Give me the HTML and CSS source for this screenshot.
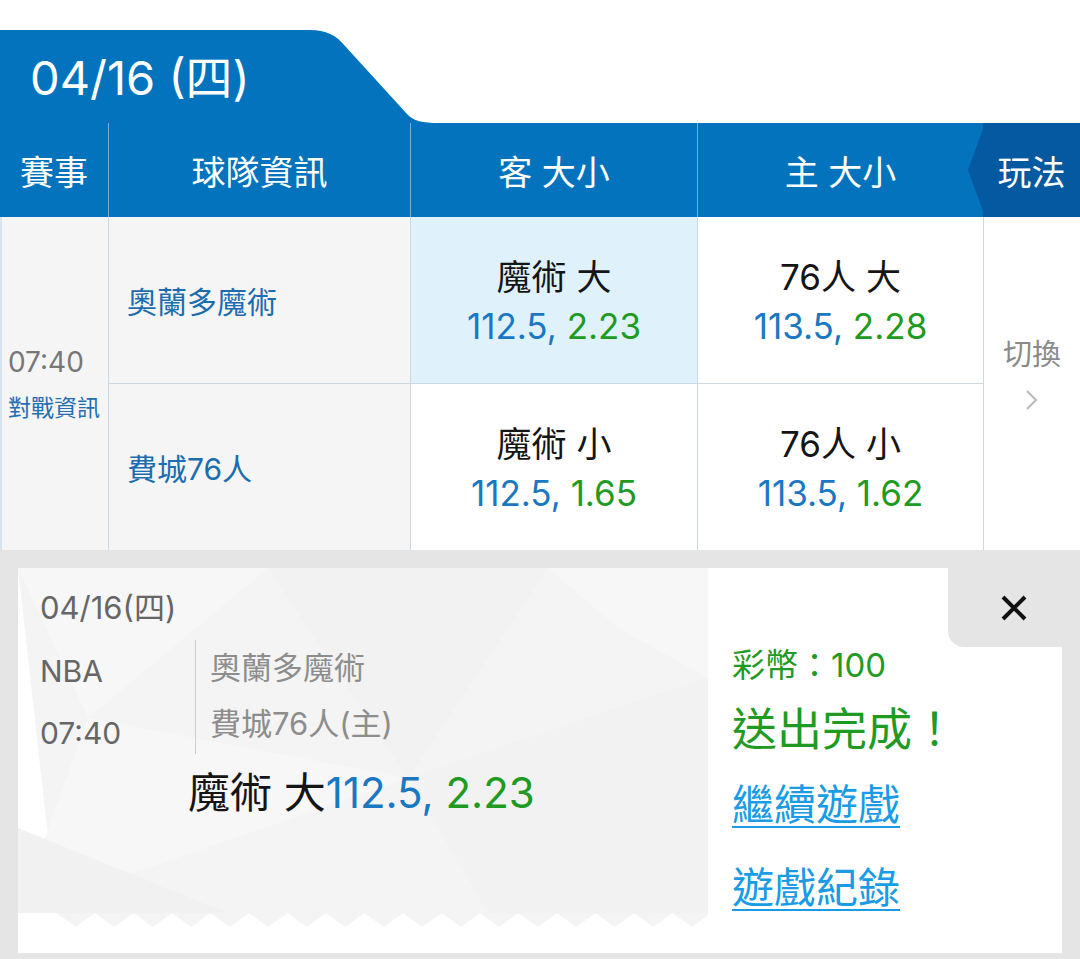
FILE: index.html
```html
<!DOCTYPE html>
<html lang="zh-Hant">
<head>
<meta charset="utf-8">
<title>投注</title>
<link rel="stylesheet" href="styles.css">
</head>
<body>
<div class="app">
  <div class="tab"><span>04/16 (四)</span></div>
  <div class="thead">
    <div class="th">賽事</div>
    <div class="th">球隊資訊</div>
    <div class="th">客 大小</div>
    <div class="th">主 大小</div>
    <div class="th th-play">玩法</div>
  </div>
  <div class="tbody">
    <div class="cell c-time">
      <div class="time">07:40</div>
      <div class="vs">對戰資訊</div>
    </div>
    <div class="cell c-team r1">奧蘭多魔術</div>
    <div class="cell c-odd r1 sel">
      <div class="lbl">魔術 大</div>
      <div class="num"><span class="b">112.5,</span> <span class="g">2.23</span></div>
    </div>
    <div class="cell c-odd r1">
      <div class="lbl">76人 大</div>
      <div class="num"><span class="b">113.5,</span> <span class="g">2.28</span></div>
    </div>
    <div class="cell c-switch">
      <div class="sw">切換</div>
      <svg class="chev" width="14" height="22" viewBox="0 0 14 22"><path d="M2 2 L11 11 L2 20" fill="none" stroke="#b9b9b9" stroke-width="2"/></svg>
    </div>
    <div class="cell c-team">費城76人</div>
    <div class="cell c-odd">
      <div class="lbl">魔術 小</div>
      <div class="num"><span class="b">112.5,</span> <span class="g">1.65</span></div>
    </div>
    <div class="cell c-odd">
      <div class="lbl">76人 小</div>
      <div class="num"><span class="b">113.5,</span> <span class="g">1.62</span></div>
    </div>
  </div>
  <div class="result">
    <div class="card">
      <div class="ticket">
        <div class="t-date">04/16(四)</div>
        <div class="t-info">
          <div class="t-meta">
            <div>NBA</div>
            <div>07:40</div>
          </div>
          <div class="t-teams">
            <div>奧蘭多魔術</div>
            <div>費城76人(主)</div>
          </div>
        </div>
        <div class="t-bet">魔術 大<span class="b">112.5,</span> <span class="g">2.23</span></div>
      </div>
      <div class="done">
        <div class="coin">彩幣：100</div>
        <div class="ok">送出完成！</div>
        <a class="link" href="#">繼續遊戲</a>
        <a class="link link2" href="#">遊戲紀錄</a>
      </div>
      <div class="close">
        <svg width="28" height="28" viewBox="0 0 28 28"><path d="M3 3 L25 25 M25 3 L3 25" stroke="#111" stroke-width="4" stroke-linecap="butt"/></svg>
      </div>
    </div>
  </div>
</div>
</body>
</html>
```

FILE: styles.css
```css
html, body {
  margin: 0;
  padding: 0;
  background: #fff;
}
body {
  font-family: Inter, "Noto Sans CJK TC", sans-serif;
}
.app {
  width: 1080px;
  height: 959px;
  padding-top: 30px;
  box-sizing: border-box;
  display: flex;
  flex-direction: column;
  overflow: hidden;
}

/* date tab */
.tab {
  width: 440px;
  height: 93px;
  flex: none;
  background: #0373be;
  clip-path: path('M0 0H310C326 0 336 5 345 16L407 84C414 91 421 93 440 93H0Z');
  color: #fff;
  font-size: 47px;
  padding: 0 0 4px 30px;
  box-sizing: border-box;
  display: flex;
  align-items: center;
}

/* header */
.thead {
  display: grid;
  grid-template-columns: 108px 302px 287px 286px 97px;
  height: 94px;
  flex: none;
  background: #0373be;
}
.th {
  color: #fff;
  font-size: 34px;
  display: flex;
  align-items: center;
  justify-content: center;
  border-left: 1px solid rgba(255, 255, 255, 0.45);
}
.th:first-child {
  border-left: none;
}
.th-play {
  background: #0559a0;
  border-left: none;
  position: relative;
}
.th-play::before {
  content: "";
  position: absolute;
  left: -15px;
  top: 6px;
  bottom: 6px;
  width: 15px;
  background: #0559a0;
  clip-path: polygon(100% 0, 0 50%, 100% 100%);
}

/* body */
.tbody {
  display: grid;
  grid-template-columns: 108px 302px 287px 286px 97px;
  grid-template-rows: 167px 166px;
  flex: none;
}
.cell {
  box-sizing: border-box;
  border-left: 1px solid #cbd9e5;
}
.r1 {
  border-bottom: 1px solid #cbd9e5;
}
.c-time {
  grid-row: 1 / span 2;
  background: #f5f5f5;
  border-left: 2px solid #d6e4f0;
  display: flex;
  flex-direction: column;
  justify-content: center;
  padding-left: 6px;
}
.time {
  font-size: 28px;
  color: #777;
  line-height: 44px;
}
.vs {
  font-size: 23px;
  color: #1f6fb2;
  line-height: 38px;
  margin-top: 5px;
  white-space: nowrap;
}
.c-team {
  background: #f5f5f5;
  padding-left: 18px;
  display: flex;
  align-items: center;
  font-size: 30px;
  color: #1b6db0;
}
.c-odd {
  background: #fff;
  display: flex;
  flex-direction: column;
  align-items: center;
  justify-content: center;
  padding-top: 4px;
}
.sel {
  background: #dff2fc;
}
.lbl {
  font-size: 35px;
  color: #151515;
  line-height: 48px;
}
.num {
  font-size: 35px;
  line-height: 50px;
}
.b {
  color: #1a78c2;
}
.g {
  color: #1f9a23;
}
.c-switch {
  grid-column: 5;
  grid-row: 1 / span 2;
  background: #fff;
  display: flex;
  flex-direction: column;
  align-items: center;
  padding-top: 118px;
}
.sw {
  font-size: 29px;
  color: #8a8a8a;
  line-height: 40px;
}
.chev {
  margin-top: 14px;
  display: block;
}

/* result area */
.result {
  flex: 1;
  background: #e5e5e5;
  padding: 18px 18px 6px;
}
.card {
  position: relative;
  display: flex;
  height: 385px;
  background: #fff;
}
.ticket {
  width: 690px;
  flex: none;
  box-sizing: border-box;
  padding: 20px 0 0 22px;
  background-color: #fff;
  background-repeat: no-repeat;
  background-size: 690px 360px;
  background-image: url("data:image/svg+xml,%3Csvg xmlns='http://www.w3.org/2000/svg' width='690' height='360' viewBox='0 0 690 360'%3E%3Cpath fill='%23f4f4f4' d='M0 0H693V345l-19.25 14l-19.25-14l-19.25 14l-19.25-14l-19.25 14l-19.25-14l-19.25 14l-19.25-14l-19.25 14l-19.25-14l-19.25 14l-19.25-14l-19.25 14l-19.25-14l-19.25 14l-19.25-14l-19.25 14l-19.25-14l-19.25 14l-19.25-14l-19.25 14l-19.25-14l-19.25 14l-19.25-14l-19.25 14l-19.25-14l-19.25 14l-19.25-14l-19.25 14l-19.25-14l-19.25 14l-19.25-14l-19.25 14l-19.25-14Z'/%3E%3Cpolygon points='0,0 250,0 70,150' fill='%23f7f7f7'/%3E%3Cpolygon points='250,0 530,0 390,210' fill='%23f2f2f2'/%3E%3Cpolygon points='70,150 390,210 0,345' fill='%23f7f7f7'/%3E%3Cpolygon points='390,210 690,110 690,345 470,345' fill='%23f2f2f2'/%3E%3Cpolygon points='0,260 210,345 0,345' fill='%23f1f1f1'/%3E%3Cpolygon points='530,0 690,0 690,110 600,60' fill='%23f7f7f7'/%3E%3C/svg%3E");
}
.t-date {
  font-size: 31px;
  color: #666;
  line-height: 40px;
}
.t-info {
  display: flex;
  margin-top: 12px;
}
.t-meta {
  width: 155px;
  font-size: 30px;
  color: #666;
  line-height: 62px;
}
.t-teams {
  border-left: 1px solid #cfcfcf;
  padding-left: 14px;
  font-size: 31px;
  color: #8d8d8d;
  line-height: 56px;
  margin-bottom: 10px;
}
.t-bet {
  margin: 4px 0 0 148px;
  font-size: 42px;
  line-height: 50px;
  color: #151515;
}

.done {
  flex: 1;
  display: flex;
  flex-direction: column;
  align-items: flex-start;
  padding: 75px 0 0 24px;
}
.coin {
  font-size: 33px;
  color: #1f9a23;
  line-height: 44px;
}
.ok {
  font-size: 45px;
  color: #1f9a23;
  line-height: 60px;
  margin-top: 13px;
}
.link {
  font-size: 42px;
  line-height: 60px;
  color: #1a9be6;
  text-decoration: underline;
  text-decoration-thickness: 2px;
  text-underline-offset: 6px;
  margin-top: 15px;
}
.link2 {
  margin-top: 23px;
}
.close {
  position: absolute;
  top: 0;
  right: 0;
  width: 114px;
  height: 79px;
  background: #e5e5e5;
  border-bottom-left-radius: 16px;
  display: flex;
  align-items: center;
  justify-content: center;
  padding-left: 18px;
  box-sizing: border-box;
}
.close svg {
  display: block;
}
```
